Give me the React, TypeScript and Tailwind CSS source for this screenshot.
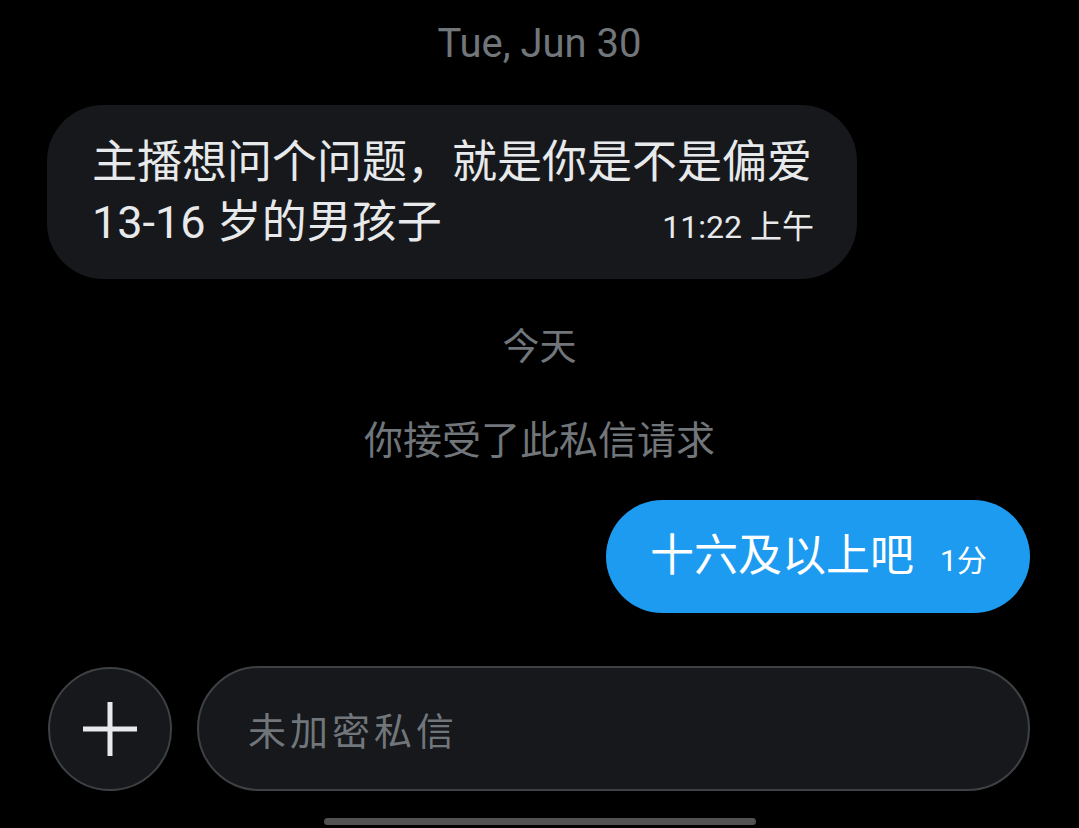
import React from "react";

const CJK = '"Noto Sans CJK SC", "Noto Sans", sans-serif';
const LATIN = 'Roboto, "Noto Sans CJK SC", sans-serif';

export default function App() {
  return (
    <div className="w-[1079px] h-[828px] bg-black flex flex-col overflow-hidden" style={{ fontFamily: LATIN }}>
      <div className="mt-[22px] h-[44px] leading-[44px] text-[40px] text-[#71767b] text-center">Tue, Jun 30</div>

      <div className="mt-[39px] ml-[47px] w-[810px] h-[174px] rounded-[56px] bg-[#16181c] pl-[45px] pr-[43px] pt-[28px] text-[#e7e9ea]">
        <div className="h-[60px] leading-[60px] text-[45px] whitespace-nowrap" style={{ fontFamily: LATIN }}>
          主播想问个问题，就是你是不是偏爱
        </div>
        <div className="h-[60px] flex items-baseline justify-between">
          <span className="leading-[60px] text-[45px] whitespace-nowrap" style={{ fontFamily: LATIN }}>
            13-16 岁的男孩子
          </span>
          <span className="text-[32px] leading-[60px] whitespace-nowrap" style={{ fontFamily: LATIN }}>
            11:22 上午
          </span>
        </div>
      </div>

      <div className="mt-[43px] h-[44px] leading-[44px] text-[37px] text-[#71767b] text-center" style={{ fontFamily: CJK }}>
        今天
      </div>
      <div className="mt-[49px] h-[44px] leading-[44px] text-[39px] text-[#71767b] text-center" style={{ fontFamily: CJK }}>
        你接受了此私信请求
      </div>

      <div className="mt-[41px] self-end mr-[49px] h-[113px] w-[424px] rounded-full bg-[#1d9bf0] flex items-center pl-[44px] text-white">
        <div className="flex items-baseline gap-[26px]">
          <span className="text-[44px] leading-[60px] whitespace-nowrap" style={{ fontFamily: CJK }}>十六及以上吧</span>
          <span className="text-[30px] leading-[60px] whitespace-nowrap" style={{ fontFamily: LATIN }}>1分</span>
        </div>
      </div>

      <div className="mt-[53px] ml-[48px] flex items-center gap-[25px]">
        <div className="w-[124px] h-[124px] rounded-full border-2 border-[#3e4144] bg-[#16181c] flex items-center justify-center">
          <svg width="58" height="58" viewBox="0 0 58 58">
            <path d="M29 2 V56 M2 29 H56" stroke="#e7e9ea" strokeWidth="5" fill="none" />
          </svg>
        </div>
        <div className="w-[833px] h-[125px] rounded-full border-2 border-[#3e4144] bg-[#16181c] flex items-center pl-[49px]">
          <span className="text-[38px] tracking-[4px] text-[#71767b]" style={{ fontFamily: CJK }}>未加密私信</span>
        </div>
      </div>

      <div className="mt-[27px] mx-auto w-[432px] h-[7px] rounded-full bg-[#525252]" />
    </div>
  );
}
